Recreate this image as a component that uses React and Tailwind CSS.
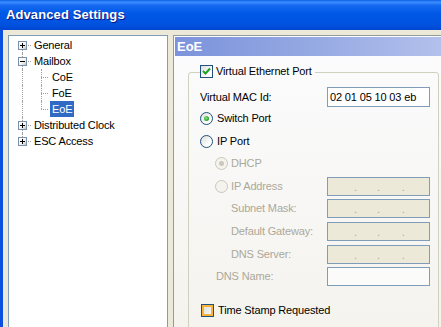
import React from 'react';

const FONT = "font-['Liberation_Sans',Arial,sans-serif] tracking-[-0.15px]";

// tree expander box with + or -
const Expander = ({ open }) => (
    <span className="absolute left-[5px] top-[4px] z-10 w-[9px] h-[9px] border border-[#7A90AC] bg-[linear-gradient(135deg,#FFFFFF_0%,#F2F2EE_60%,#C8C5B8_100%)]">
        <span className="absolute left-[1px] top-[3px] w-[5px] h-px bg-black" />
        {!open && <span className="absolute left-[3px] top-[1px] w-px h-[5px] bg-black" />}
    </span>
);

const VLine = ({ pos, left }) => {
    const span = pos === 'first' ? 'top-[8px] bottom-0' : pos === 'last' ? 'top-0 h-[8px]' : 'top-0 bottom-0';
    return <span className={`absolute ${left} ${span} w-0 border-l border-dotted border-[#A0A0A0]`} />;
};

const TreeRow = ({ label, pos, open, expander = true }) => (
    <div className="flex items-center h-4">
        <div className="relative w-[19px] h-4 shrink-0">
            <VLine pos={pos} left="left-[9px]" />
            <span className="absolute left-[9px] top-[8px] w-[9px] h-0 border-t border-dotted border-[#A0A0A0]" />
            {expander && <Expander open={open} />}
        </div>
        <span className="px-[2px] text-[11px] leading-4 text-black">{label}</span>
    </div>
);

const ChildRow = ({ label, pos, selected }) => (
    <div className="flex items-center h-4">
        <div className="relative w-[19px] h-4 shrink-0">
            <VLine pos="mid" left="left-[9px]" />
        </div>
        <div className="relative w-[18px] h-4 shrink-0">
            <VLine pos={pos === 'first' ? 'mid' : pos} left="left-[9px]" />
            <span className="absolute left-[9px] top-[8px] w-[7px] h-0 border-t border-dotted border-[#A0A0A0]" />
        </div>
        <span className={`px-[2px] h-4 text-[11px] leading-4 ${selected ? 'bg-[#316AC5] text-white' : 'text-black'}`}>{label}</span>
    </div>
);

const Radio = ({ checked, disabled }) => (
    <span className={`relative flex items-center justify-center w-[13px] h-[13px] rounded-full border shrink-0 ${
        disabled
            ? 'border-[#CAC8BB] bg-[#F4F3EE]'
            : 'border-[#1C5180] bg-[linear-gradient(135deg,#DCDCD7_0%,#FFFFFF_70%)]'
    }`}>
        {checked && (
            <span className={`w-[5px] h-[5px] rounded-full ${
                disabled ? 'bg-[#CAC8BB]' : 'bg-[radial-gradient(circle_at_40%_40%,#8FE08F_0%,#21A121_70%)]'
            }`} />
        )}
    </span>
);

const Check = ({ checked, hover }) => (
    <span className="relative flex items-center justify-center w-[13px] h-[13px] border border-[#1C5180] shrink-0 bg-[linear-gradient(135deg,#DCDCD7_0%,#FFFFFF_70%)]">
        {hover && <span className="w-[11px] h-[11px] border-2 border-[#F8B33A] bg-[linear-gradient(135deg,#E2E2DC_0%,#F2F2EE_80%)]" />}
        {checked && (
            <svg width="9" height="9" viewBox="0 0 9 9" className="absolute left-[1px] top-[1px]">
                <path d="M1 4 L3.5 6.5 L8 1.5" stroke="#21A121" strokeWidth="2" fill="none" />
            </svg>
        )}
    </span>
);

const IpBox = () => (
    <div className="flex items-end w-[103px] h-[19px] border border-[#7F9DB9] bg-[#ECE9D8] text-[11px] leading-[15px] text-[#ACA899]">
        <span className="ml-[26px]">.</span>
        <span className="ml-[20px]">.</span>
        <span className="ml-[22px]">.</span>
    </div>
);

const FieldRow = ({ label, children, className = '', indent = 'pl-[31px]' }) => (
    <div className={`flex items-center justify-between h-[19px] ${className}`}>
        <span className={`${indent} text-[11px] text-[#ACA899]`}>{label}</span>
        {children}
    </div>
);

export default function App() {
    return (
        <div className={`w-[441px] h-[327px] overflow-hidden flex flex-col bg-[#ECE9D8] ${FONT}`}>
            {/* Title bar */}
            <div className="h-[30px] shrink-0 flex items-center pl-[6px] bg-[linear-gradient(180deg,#0A5FE6_0%,#3D8DFF_7%,#1469F0_18%,#0058E6_45%,#0053E0_80%,#0046D3_100%)]">
                <span className="text-[13px] font-bold text-white [text-shadow:1px_1px_0_#0A1883] tracking-[0.1px]">
                    Advanced Settings
                </span>
            </div>

            <div className="flex flex-1 min-h-0">
                <div className="w-[3px] bg-[#0A4FE0] shrink-0" />

                <div className="flex flex-1 pt-[5px] pl-[5px] gap-[5px]">
                    {/* Tree */}
                    <div className="w-[160px] shrink-0 bg-white border-l border-t border-r border-[#7F9DB9] pt-px pl-[4px]">
                        <TreeRow label="General" pos="first" />
                        <TreeRow label="Mailbox" pos="mid" open />
                        <ChildRow label="CoE" pos="first" />
                        <ChildRow label="FoE" pos="mid" />
                        <ChildRow label="EoE" pos="last" selected />
                        <TreeRow label="Distributed Clock" pos="mid" />
                        <TreeRow label="ESC Access" pos="last" />
                    </div>

                    {/* Property page */}
                    <div className="flex-1 border-l border-t border-[#919B9C] pt-px pl-px bg-[linear-gradient(180deg,#FCFCFE_0%,#F4F3EE_100%)]">
                        <div className="h-[19px] flex items-center pl-[2px] bg-[linear-gradient(90deg,#7C93DC_0%,#94A8E2_50%,#B3C0EC_100%)]">
                            <span className="text-[13px] font-bold text-white tracking-normal">EoE</span>
                        </div>

                        <div className="relative mt-[16px] ml-[13px] w-[251px] h-[300px] border border-[#D0D0BF] rounded-[3px] pt-[14px] pl-[11px] pr-[8px]">
                            <div className="absolute left-[11px] top-[-8px] flex items-center gap-[3px] pr-[3px] bg-[#FBFBFC]">
                                <Check checked />
                                <span className="text-[11px] text-black leading-[13px]">Virtual Ethernet Port</span>
                            </div>

                            <div className="flex items-center justify-between h-[20px]">
                                <span className="text-[11px] text-black">Virtual MAC Id:</span>
                                <div className="flex items-center w-[103px] h-[20px] border border-[#7F9DB9] bg-white pl-[2px] text-[11px] text-black">
                                    02 01 05 10 03 eb
                                </div>
                            </div>

                            <div className="flex items-center gap-[4px] h-[22px]">
                                <Radio checked />
                                <span className="text-[11px] text-black">Switch Port</span>
                            </div>
                            <div className="flex items-center gap-[4px] h-[24px]">
                                <Radio />
                                <span className="text-[11px] text-black">IP Port</span>
                            </div>
                            <div className="flex items-center gap-[3px] h-[20px] pl-[15px]">
                                <Radio checked disabled />
                                <span className="text-[11px] text-[#ACA899]">DHCP</span>
                            </div>

                            <div className="flex items-center justify-between h-[19px] mt-[4px]">
                                <div className="flex items-center gap-[3px] pl-[15px]">
                                    <Radio disabled />
                                    <span className="text-[11px] text-[#ACA899]">IP Address</span>
                                </div>
                                <IpBox />
                            </div>
                            <FieldRow label="Subnet Mask:" className="mt-[3px]"><IpBox /></FieldRow>
                            <FieldRow label="Default Gateway:" className="mt-[4px]"><IpBox /></FieldRow>
                            <FieldRow label="DNS Server:" className="mt-[4px]"><IpBox /></FieldRow>
                            <FieldRow label="DNS Name:" indent="pl-[16px]" className="mt-[3px]">
                                <div className="w-[103px] h-[19px] border border-[#7F9DB9] bg-[#FBFBFA]" />
                            </FieldRow>

                            <div className="flex items-center gap-[4px] h-[13px] mt-[18px] pl-px">
                                <Check hover />
                                <span className="text-[11px] text-black">Time Stamp Requested</span>
                            </div>
                        </div>
                    </div>
                </div>
            </div>
        </div>
    );
}
